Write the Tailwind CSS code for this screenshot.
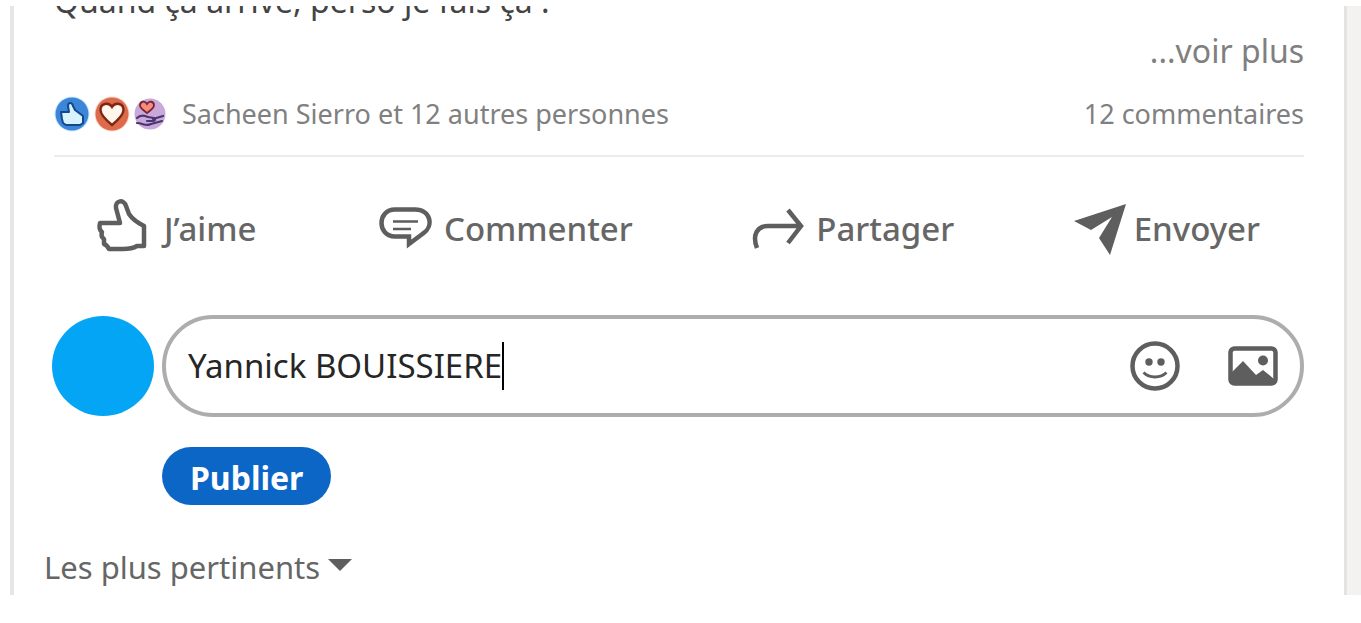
<!DOCTYPE html>
<html lang="fr">
<head>
    <meta charset="UTF-8">
    <meta name="viewport" content="width=device-width, initial-scale=1.0">
    <title>Publication</title>
    <script src="https://cdn.jsdelivr.net/npm/@tailwindcss/browser@4"></script>
</head>
<body class="bg-white pt-1.5 pb-7 font-['Noto_Sans','Open_Sans',sans-serif] text-[#666666]">

    <div class="flex bg-[#f3f2f0]">
        <main class="grow border-l-10 border-white bg-white mr-3.5">
            <div class="border-l-4 border-r-3 border-l-[#e6e6e6] border-r-[#e4e3e2] pl-7.5 pr-10 pb-1.5">

                <!-- Texte du post -->
                <div class="flex h-[23px] items-end overflow-hidden pl-2.5 text-[32px] leading-14 text-[#444444]">
                    <p>Quand ça arrive, perso je fais ça :</p>
                </div>
                <div class="flex justify-end text-[32px] leading-11 text-[#808080]">
                    <a href="#">...voir plus</a>
                </div>

                <!-- Réactions et commentaires -->
                <div class="ml-2.5 flex h-21 items-center justify-between border-b-2 border-[#ececec] text-[27px] text-[#808080]">
                    <a href="#" class="flex items-center">
                        <svg class="mr-1 size-9" viewBox="0 0 36 36">
                            <circle cx="18" cy="18" r="17.500" fill="#cfe8fb"/>
                            <circle cx="18" cy="18" r="16.500" fill="#3b86d9"/>
                            <path d="M7 16h8l-1-6c0-4 4-4 5 0l2 4 8 6v7l-3 2H12l-3-2-1-4z" fill="#d8f3ff" stroke="#12498c" stroke-width="2" stroke-linejoin="round"/>
                        </svg>
                        <svg class="mr-1 size-9" viewBox="0 0 36 36">
                            <circle cx="18" cy="18" r="17.500" fill="#fbd9cc"/>
                            <circle cx="18" cy="18" r="16.500" fill="#dc6a4b"/>
                            <path d="M18 29C12 24 6.500 19 6.500 14C6.500 7 15 6 18 11C21 6 29.500 7 29.500 14C29.500 19 24 24 18 29z" fill="#fff6ec" stroke="#7d2614" stroke-width="2.400"/>
                        </svg>
                        <svg class="mr-3 size-9" viewBox="0 0 36 36">
                            <circle cx="16" cy="18" r="15.500" fill="#c9a9da"/>
                            <path d="M13 17C9 14 6 12 6 9.500C6 5 11 4.500 13 8C15 4.500 20 5 20 9.500C20 12 17 14 13 17z" fill="#f58d78" stroke="#7a2438" stroke-width="1.800"/>
                            <path d="M3 22c3-3 7-3 11-1l6 1c2 1 1 3-1 3h-6M19 23l10-3M3 27c6 0 9 4 14 1l11-3" fill="none" stroke="#4b3470" stroke-width="2.200" stroke-linecap="round" stroke-linejoin="round"/>
                        </svg>
                        <span>Sacheen Sierro et 12 autres personnes</span>
                    </a>
                    <a href="#">12 commentaires</a>
                </div>

                <!-- Boutons d'action -->
                <div class="mt-10 flex justify-between pl-13 pr-11 text-[33px] leading-16 font-medium">
                    <button class="flex items-center gap-4">
                        <svg class="h-14 w-13 overflow-visible" viewBox="0 4 52 56" fill="none" stroke="#5e5e5e" stroke-width="4.500" stroke-linejoin="round">
                            <path d="M4 26h20l-4-15c-1-8 8-9 10-2l3 8c4 6 9 9 15 12v20h-7c-5 3-9 3-14 3H13c-1-2-2-4-5-5l0-5c-3-2-3-4-2-7c-3-2-3-5-2-9z"/>
                        </svg>
                        <span>J’aime</span>
                    </button>
                    <button class="flex items-center gap-3">
                        <svg class="h-14 w-14" viewBox="0 0 56 56" fill="none" stroke="#5e5e5e" stroke-width="4.500">
                            <path d="M19 8.500h20c16 0 19 17 8 24L33 43v-7.500H19c-18 0-18-27 0-27z"/>
                            <path d="M17 20.500h25M17 28h18" stroke-width="2.500"/>
                        </svg>
                        <span>Commenter</span>
                    </button>
                    <button class="flex items-center gap-3">
                        <svg class="h-14 w-13" viewBox="0 0 52 56" fill="none" stroke="#5e5e5e" stroke-width="4.500">
                            <path d="M5 47c-5-13 0-22 11-22h33M36 9l13 16-13 17"/>
                        </svg>
                        <span>Partager</span>
                    </button>
                    <button class="flex items-center gap-2">
                        <svg class="h-14 w-13" viewBox="0 0 52 56" fill="#5e5e5e">
                            <path d="M0 20L52 3 36 54 25 37 38 16 17 29z"/>
                        </svg>
                        <span>Envoyer</span>
                    </button>
                </div>

                <!-- Saisie du commentaire -->
                <form class="mt-13.5">
                    <div class="ml-2 flex items-center gap-2">
                        <div class="h-25 w-[102px] shrink-0 rounded-[50%] bg-[#03a5f4]"></div>
                        <div class="flex h-[102px] grow items-center rounded-full border-4 border-[#adadad] px-5.5">
                            <label for="commentaire" class="sr-only">Ajouter un commentaire</label>
                            <input id="commentaire" type="text" value="Yannick BOUISSIERE" class="field-sizing-content border-r-2 border-black text-[33px] leading-12 text-[#262626] outline-none">
                            <button type="button" aria-label="Emoji" class="ml-auto">
                                <svg class="size-[50px]" viewBox="0 0 50 50" fill="none" stroke="#5e5e5e">
                                    <circle cx="25" cy="25" r="22.500" stroke-width="4.500"/>
                                    <circle cx="19" cy="21" r="3.700" fill="#5e5e5e" stroke="none"/>
                                    <circle cx="31" cy="21" r="3.700" fill="#5e5e5e" stroke="none"/>
                                    <path d="M13.500 31.500c6 6 17 6 23 0" stroke-width="2.800"/>
                                </svg>
                            </button>
                            <button type="button" aria-label="Photo" class="ml-12">
                                <svg class="h-10 w-[50px]" viewBox="0 0 50 40">
                                    <rect x="2.500" y="2.500" width="45" height="35" rx="4" fill="none" stroke="#5e5e5e" stroke-width="4.500"/>
                                    <circle cx="35" cy="14.500" r="5" fill="#5e5e5e"/>
                                    <path d="M3 27L15 15 28 29 35 24 46 33V38H3z" fill="#5e5e5e"/>
                                </svg>
                            </button>
                        </div>
                    </div>
                    <button type="submit" class="mt-7.5 ml-[118px] block h-[58px] rounded-full bg-[#0b66c6] px-7 pt-1 text-[32px] font-bold text-white">Publier</button>
                </form>

                <!-- Tri des commentaires -->
                <button class="mt-10 flex items-center gap-2 text-[31px] leading-11">
                    <span>Les plus pertinents</span>
                    <svg class="mb-1 h-3 w-6" viewBox="0 0 24 12" fill="#5e5e5e"><path d="M0 0h24L12 12z"/></svg>
                </button>
            </div>
        </main>
    </div>

</body>
</html>
